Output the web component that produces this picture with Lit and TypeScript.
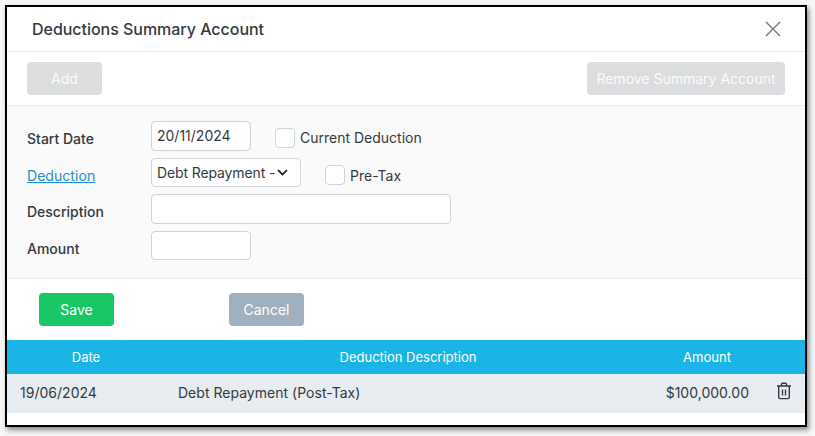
import { LitElement, html, css } from "lit";
import { customElement } from "lit/decorators.js";

@customElement("app-root")
export class AppRoot extends LitElement {
  static styles = css`
    :host { display: block; width: 815px; height: 436px; box-sizing: border-box; padding: 5px 8px 9px 5px; background: #f7f7f7; font-family: Inter, "Liberation Sans", sans-serif; font-size: 14px; color: #343a40; overflow: hidden; }
    * { box-sizing: border-box; }
    .modal { width: 802px; height: 422px; border: 2px solid #000; background: #fff; box-shadow: 2px 3px 5px rgba(0,0,0,.45); display: flex; flex-direction: column; }
    .head { height: 45px; flex: none; border-bottom: 1px solid #e9ecef; display: flex; align-items: center; justify-content: space-between; padding: 0 24px 0 25px; }
    .title { font-size: 16px; font-weight: 500; letter-spacing: -.03px; color: #343a40; }
    .close { display: block; width: 16px; height: 16px; }
    .toolbar { height: 54px; flex: none; border-bottom: 1px solid #e9ecef; display: flex; align-items: center; justify-content: space-between; padding: 0 20px 0 20px; }
    .btn { height: 33px; border: 0; border-radius: 4px; font: 400 14px Inter, "Liberation Sans", sans-serif; color: #fff; padding: 0; display: flex; align-items: center; justify-content: center; }
    .off { background: #dcdddf; color: #fafafa; }
    .add { width: 75px; }
    .remove { width: 198px; }
    .form { height: 173px; flex: none; background: #fafafa; border-bottom: 1px solid #e9ecef; padding: 15px 0 0 20px; display: grid; grid-template-columns: 124px 1fr; grid-template-rows: repeat(4, 29.6px); row-gap: 7px; align-items: center; }
    .label { font-weight: 500; font-size: 14px; color: #343a40; padding-top: 6px; }
    .link { color: #1a8fd1; text-decoration: underline; font-weight: 400; letter-spacing: .05px; padding-top: 7px; }
    .row { display: flex; align-items: center; height: 100%; }
    .field { height: 100%; background: #fff; border: 1px solid #ced4da; border-radius: 4px; font-size: 14px; padding: 0 5px; display: flex; align-items: center; color: #343a40; }
    .date { width: 100px; }
    .sel { width: 150px; justify-content: space-between; white-space: nowrap; overflow: hidden; padding-right: 12px; }
    .sel span { letter-spacing: -.12px; }
    .sel svg { flex: none; }
    .desc { width: 300px; }
    .check { width: 20px; height: 20px; background: #fff; border: 1px solid #ced4da; border-radius: 4px; flex: none; }
    .cl { margin-left: 5px; }
    .c1 { margin-left: 24px; margin-top: 4px; display: flex; align-items: center; }
    .c2 { margin-left: 24px; margin-top: 6px; display: flex; align-items: center; }
    .actions { height: 61px; flex: none; display: flex; align-items: flex-start; padding: 14px 0 0 32px; gap: 115px; }
    .save { width: 75px; background: #1ac766; }
    .cancel { width: 75px; background: #a0b0bc; }
    .thead, .trow { display: grid; grid-template-columns: 158px 486px 112px 42px; align-items: center; flex: none; }
    .thead { height: 34px; background: #1ab5e5; color: #fff; font-weight: 400; font-size: 13px; text-align: center; }
    .trow { height: 39px; background: #e6ecf0; letter-spacing: .02px; padding-bottom: 2px; }
    .d { padding-left: 13px; }
    .dd { padding-left: 13px; }
    .amt { text-align: right; margin-right: 14px; }
    .icon { display: flex; justify-content: flex-end; padding: 0 13px 3px 0; }
  `;

  render() {
    return html`
      <div class="modal">
        <div class="head">
          <span class="title">Deductions Summary Account</span>
          <svg class="close" viewBox="0 0 16 16" fill="none" stroke="#757575" stroke-width="1.4"><path d="M1 1l14 14M15 1L1 15"/></svg>
        </div>
        <div class="toolbar">
          <div class="btn off add">Add</div>
          <div class="btn off remove">Remove Summary Account</div>
        </div>
        <div class="form">
          <div class="label">Start Date</div>
          <div class="row">
            <div class="field date">20/11/2024</div>
            <div class="c1"><span class="check"></span><span class="cl">Current Deduction</span></div>
          </div>
          <div class="label link">Deduction</div>
          <div class="row">
            <div class="field sel"><span>Debt Repayment -</span>
              <svg width="11" height="7" viewBox="0 0 11 7" fill="none" stroke="#111" stroke-width="1.7"><path d="M1 1l4.5 4.5L10 1"/></svg>
            </div>
            <div class="c2"><span class="check"></span><span class="cl">Pre-Tax</span></div>
          </div>
          <div class="label">Description</div>
          <div class="row"><div class="field desc"></div></div>
          <div class="label">Amount</div>
          <div class="row"><div class="field date"></div></div>
        </div>
        <div class="actions">
          <div class="btn save">Save</div>
          <div class="btn cancel">Cancel</div>
        </div>
        <div class="thead">
          <div>Date</div>
          <div>Deduction Description</div>
          <div>Amount</div>
          <div></div>
        </div>
        <div class="trow">
          <div class="d">19/06/2024</div>
          <div class="dd">Debt Repayment (Post-Tax)</div>
          <div class="amt">$100,000.00</div>
          <div class="icon">
            <svg width="16" height="18" viewBox="0 0 16 18" fill="none" stroke="#343a40" stroke-width="1.4"><path d="M1 4h14M5.5 4V2.2c0-.5.4-.9.9-.9h3.2c.5 0 .9.4.9.9V4M2.7 4v11.2c0 .8.6 1.4 1.4 1.4h7.8c.8 0 1.4-.6 1.4-1.4V4M6.5 7.5v6M9.5 7.5v6"/></svg>
          </div>
        </div>
      </div>
    `;
  }
}
